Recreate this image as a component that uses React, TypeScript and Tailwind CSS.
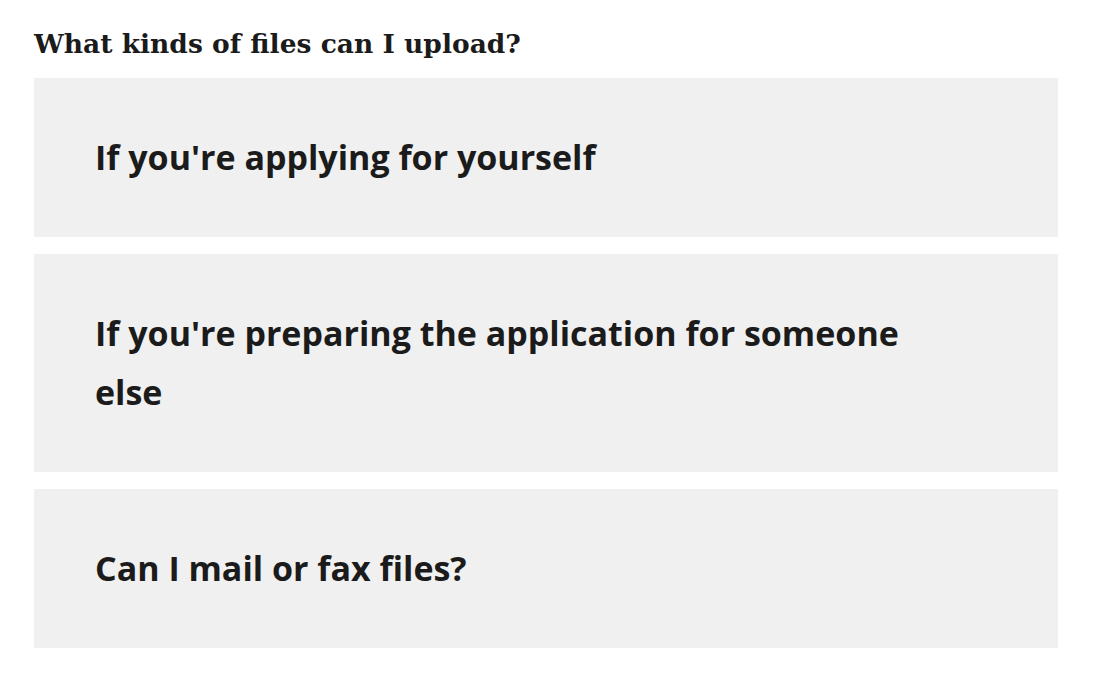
export default function App() {
  const items = [
    "If you're applying for yourself",
    "If you're preparing the application for someone else",
    "Can I mail or fax files?",
  ];
  return (
    <div className="min-h-[682px] w-[1094px] bg-white px-[34px] pt-[26px] text-[#1b1b1b]">
      <h2
        className="m-0 text-[26.5px] font-bold leading-[36px]"
        style={{ fontFamily: '"DejaVu Serif", "Liberation Serif", serif' }}
      >
        What kinds of files can I upload?
      </h2>
      <div className="mt-[16px] flex w-[1024px] flex-col gap-[17px]">
        {items.map((t) => (
          <div key={t} className="bg-[#f0f0f0] px-[61px] py-[50px]">
            <div
              className="max-w-[830px] text-[34px] font-bold leading-[59px]"
              style={{ fontFamily: '"Open Sans", "Noto Sans", sans-serif' }}
            >
              {t}
            </div>
          </div>
        ))}
      </div>
    </div>
  );
}
